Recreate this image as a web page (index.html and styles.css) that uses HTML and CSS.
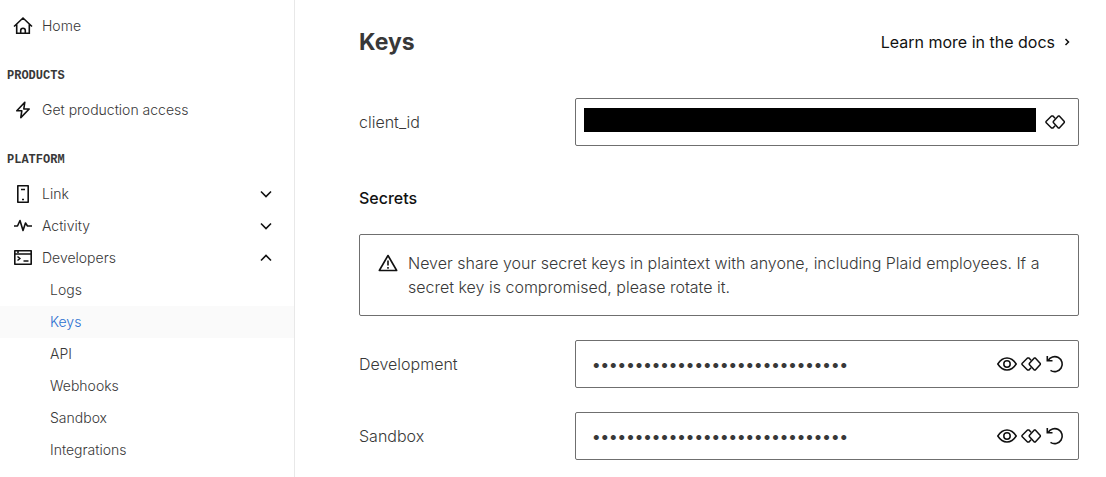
FILE: index.html
```html
<!DOCTYPE html>
<html lang="en">
<head>
<meta charset="utf-8">
<title>Keys</title>
<meta name="viewport" content="width=device-width, initial-scale=1">
<link rel="stylesheet" href="styles.css">
</head>
<body>
<svg class="sprite" aria-hidden="true">
  <symbol id="copy" viewBox="0 0 24 24"><path stroke-linejoin="round" d="M15.300 6h1L21.300 11.500v1L16.300 18h-1L10.300 12.500v-1ZM12 8.300 10 6H8.500L3 11.500v1L8.500 18H10l2-2.300"/></symbol>
  <symbol id="eye" viewBox="0 0 24 24"><path d="M2.800 12C5 8.500 8.500 6 12 6s7 2.500 9.200 6C19 15.500 15.500 18 12 18s-7-2.500-9.200-6Z"/><circle cx="12" cy="12" r="3.200"/></symbol>
  <symbol id="rotate" viewBox="0 0 24 24"><path d="M4.300 4V8.800H9.500M5 8.800A7.500 7.500 0 1 1 7.500 18.300"/></symbol>
  <symbol id="chevron" viewBox="0 0 24 24"><path d="m7 9.500 5 5 5-5"/></symbol>
</svg>
<div class="layout">
  <nav class="sidebar" aria-label="Main">
    <a class="nav-item" href="#home">
      <svg class="icon" viewBox="0 0 24 24"><path d="M3 12.500 12 4l9 8.500M5.700 10.500V19.200H18.300V10.500M9.700 19V16.500a2.300 2.300 0 0 1 4.600 0V19"/></svg>
      Home
    </a>
    <h2 class="nav-heading">PRODUCTS</h2>
    <a class="nav-item" href="#production">
      <svg class="icon" viewBox="0 0 24 24"><path stroke-linejoin="round" d="M13.800 4.200 5.800 12.800h5l-1 6.800L18.200 11h-5.400Z"/></svg>
      Get production access
    </a>
    <h2 class="nav-heading">PLATFORM</h2>
    <button class="nav-item" type="button" aria-expanded="false">
      <svg class="icon" viewBox="0 0 24 24"><path stroke-linejoin="round" d="M6.800 3.800H17.200V20.200H6.800ZM10 7.500h4M11 17.500h2"/></svg>
      Link
      <svg class="icon arrow"><use href="#chevron"/></svg>
    </button>
    <button class="nav-item" type="button" aria-expanded="false">
      <svg class="icon" viewBox="0 0 24 24"><path stroke-linejoin="round" d="M3 12h3.500L9 6.500 12 16.500 14.500 9 16.500 12H21"/></svg>
      Activity
      <svg class="icon arrow"><use href="#chevron"/></svg>
    </button>
    <button class="nav-item" type="button" aria-expanded="true">
      <svg class="icon" viewBox="0 0 24 24"><path stroke-linejoin="round" d="M3.800 4.800H20.200V18.200H3.800ZM3.800 8H20.200M6.500 10.500 9 12.500 6.500 14.500M12.500 15h5"/><path d="M7 5v2"/></svg>
      Developers
      <svg class="icon arrow up"><use href="#chevron"/></svg>
    </button>
    <a class="nav-item sub" href="#logs">Logs</a>
    <a class="nav-item sub current" href="#keys" aria-current="page">Keys</a>
    <a class="nav-item sub" href="#api">API</a>
    <a class="nav-item sub" href="#webhooks">Webhooks</a>
    <a class="nav-item sub" href="#sandbox">Sandbox</a>
    <a class="nav-item sub" href="#integrations">Integrations</a>
  </nav>
  <main class="content">
    <header class="page-header">
      <h1>Keys</h1>
      <a class="docs-link" href="#docs">Learn more in the docs
        <svg class="docs-arrow" viewBox="0 0 8 8"><path d="m2.500 1 3 3-3 3"/></svg>
      </a>
    </header>
    <div class="row">
      <label for="client-id">client_id</label>
      <div class="field">
        <input class="masked" id="client-id" type="text" readonly>
        <button class="action" type="button" aria-label="Copy client_id"><svg class="icon thin"><use href="#copy"/></svg></button>
      </div>
    </div>
    <h2 class="section-title">Secrets</h2>
    <div class="notice" role="note">
      <svg class="icon" viewBox="0 0 24 24"><path stroke-linejoin="round" d="M12 4.500 20.700 19.500H3.300Z"/><path d="M12 9.500v5M12 16v1.800"/></svg>
      <p>Never share your secret keys in plaintext with anyone, including Plaid employees. If a secret key is compromised, please rotate it.</p>
    </div>
    <div class="row">
      <label for="development">Development</label>
      <div class="field">
        <input class="secret" id="development" type="password" value="000000000000000000000000000000" readonly>
        <button class="action" type="button" aria-label="Show development secret"><svg class="icon thin"><use href="#eye"/></svg></button>
        <button class="action" type="button" aria-label="Copy development secret"><svg class="icon thin"><use href="#copy"/></svg></button>
        <button class="action" type="button" aria-label="Rotate development secret"><svg class="icon"><use href="#rotate"/></svg></button>
      </div>
    </div>
    <div class="row">
      <label for="sandbox-secret">Sandbox</label>
      <div class="field">
        <input class="secret" id="sandbox-secret" type="password" value="000000000000000000000000000000" readonly>
        <button class="action" type="button" aria-label="Show sandbox secret"><svg class="icon thin"><use href="#eye"/></svg></button>
        <button class="action" type="button" aria-label="Copy sandbox secret"><svg class="icon thin"><use href="#copy"/></svg></button>
        <button class="action" type="button" aria-label="Rotate sandbox secret"><svg class="icon"><use href="#rotate"/></svg></button>
      </div>
    </div>
  </main>
</div>
</body>
</html>
```
FILE: styles.css
```css
* { box-sizing: border-box; }

body {
  margin: 0;
  background: #fff;
  color: #383838;
  font: 300 16px/24px Inter, "Liberation Sans", sans-serif;
}

h1, h2, p { margin: 0; }
a { color: inherit; text-decoration: none; }
button, input { font: inherit; color: inherit; border: 0; background: none; padding: 0; }

.sprite { display: none; }

.icon {
  flex: none;
  width: 24px;
  height: 24px;
  fill: none;
  stroke: #111;
  stroke-width: 1.6;
}
.icon.thin { stroke-width: 1.5; }

.layout { display: flex; min-height: 100vh; }

.sidebar {
  flex: none;
  width: 295px;
  padding-top: 10px;
  border-right: 1px solid #e8e8e8;
  font-size: 14px;
}
.nav-item {
  display: flex;
  align-items: center;
  gap: 7px;
  width: 100%;
  height: 32px;
  padding: 0 16px 0 11px;
  text-align: left;
}
.nav-item.sub { padding-left: 50px; }
.nav-item.current { background: #fafafa; color: #2b6fd0; }
.nav-heading {
  margin: 25px 0 9px 7px;
  font: 700 12px/18px "Liberation Mono", monospace;
}
.arrow { margin-left: auto; }
.up { transform: rotate(180deg); }

.content { flex: 1; min-width: 0; padding: 26px 27px 16px 64px; }

.page-header { display: flex; align-items: center; justify-content: space-between; margin-bottom: 40px; }
h1 { font-size: 23px; line-height: 32px; font-weight: 700; }
.docs-link { display: flex; align-items: center; gap: 8px; padding-right: 8px; color: #111; font-weight: 400; }
.docs-arrow { width: 8px; height: 8px; fill: none; stroke: #111; stroke-width: 1.5; }

.row { display: grid; grid-template-columns: 216px 1fr; align-items: center; }
.row + .row { margin-top: 24px; }

.field {
  display: flex;
  align-items: center;
  height: 48px;
  padding: 0 11px 0 8px;
  border: 1px solid #6f6f6f;
  border-radius: 2px;
}
.action { flex: none; height: 24px; }
.masked { flex: 1; min-width: 0; height: 24px; margin: 0 7px 4px 0; background: #000; }
.secret { flex: 1; min-width: 0; padding-left: 8px; font-weight: 500; }

.section-title { margin: 40px 0 24px; color: #111; font-size: 16px; line-height: 24px; font-weight: 500; }

.notice {
  display: flex;
  gap: 8px;
  margin-bottom: 24px;
  padding: 16px;
  border: 1px solid #6f6f6f;
  border-radius: 2px;
}
```
